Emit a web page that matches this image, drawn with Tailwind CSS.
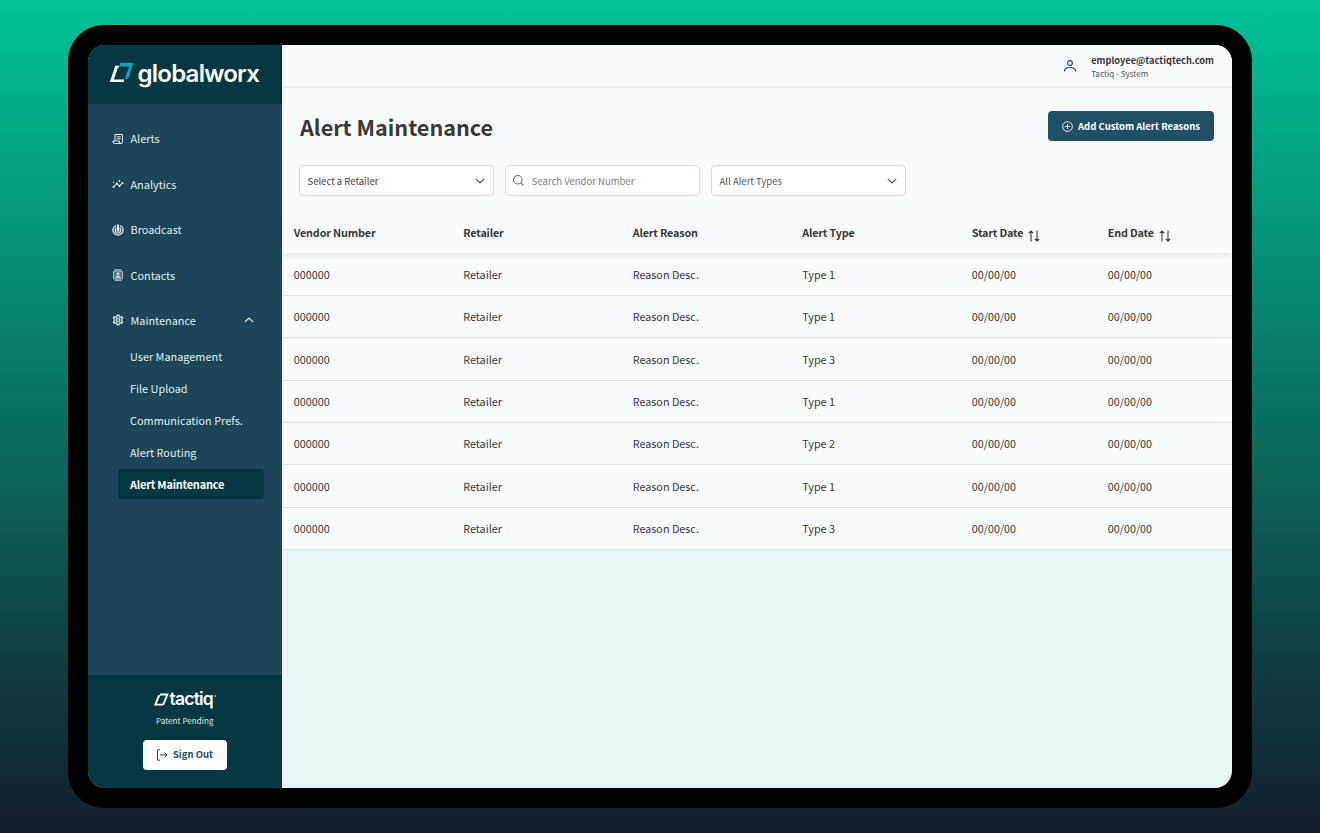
<!DOCTYPE html>
<html lang="en">
<head>
    <meta charset="UTF-8">
    <meta name="viewport" content="width=device-width, initial-scale=1.0">
    <title>Alert Maintenance</title>
    <script src="https://cdn.jsdelivr.net/npm/@tailwindcss/browser@4"></script>
</head>
<body class="h-screen overflow-hidden bg-[linear-gradient(180deg,#00c495,#141d2b)] font-['Noto_Sans_CJK_SC','Noto_Sans',sans-serif] px-[68px] pt-[25px] text-[#383838]">
<div class="h-[783px] w-[1184px] rounded-[36px] bg-black p-5">
  <div class="flex h-full overflow-hidden rounded-[17px] bg-[#e8f6f8]">

    <!-- Sidebar -->
    <aside class="flex w-[193.5px] shrink-0 flex-col bg-[#1c4656] text-[#dfedf0]">
      <div class="flex h-[59.5px] items-center border-b border-[#1e4a56] bg-[#053840] pl-[21px]">
        <svg class="h-6 w-[26px]" viewBox="0 0 26 24">
          <path d="M6.300 3.800H10.200L9.300 6.300H8.700L4.900 17.400H15.400L14.500 20.100H.8z" fill="#fff"/>
          <path d="M11.200 1.100H24.400L19.100 17H15.800L20.200 4.400H10.100z" fill="#0aa5c4"/>
        </svg>
        <span class="ml-[2.5px] font-['Inter'] text-[24px] leading-none font-semibold tracking-[-0.75px] text-white">globalworx</span>
      </div>

      <nav class="grow pt-[11.2px] text-[10.9px] leading-4">
        <a class="flex h-[45.4px] items-center pl-6">
          <svg class="mt-px mr-[6.5px] size-3" viewBox="0 0 24 24" fill="none" stroke="currentColor" stroke-width="2"><path d="M6 16V3h15v15a3 3 0 0 1-3 3H5a3 3 0 0 1-3-3v-2h13v2a3 3 0 0 0 3 3M9.500 7.500h8M9.500 11.500h8"/></svg>
          Alerts
        </a>
        <a class="flex h-[45.4px] items-center pl-6">
          <svg class="mt-px mr-[6.5px] size-3" viewBox="0 0 24 24" fill="currentColor"><path d="M21 8c-1.450 0-2.260 1.440-1.930 2.510l-3.550 3.560c-.3-.09-.74-.09-1.040 0l-2.550-2.550C12.270 10.450 11.460 9 10 9c-1.450 0-2.270 1.440-1.930 2.520l-4.560 4.550C2.440 15.740 1 16.550 1 18c0 1.100.9 2 2 2 1.450 0 2.260-1.440 1.930-2.510l4.550-4.560c.3.090.740.090 1.040 0l2.550 2.550C12.730 16.550 13.540 18 15 18c1.450 0 2.270-1.440 1.930-2.520l3.560-3.550c1.070.330 2.510-.480 2.510-1.930 0-1.100-.9-2-2-2z"/><path d="M15 9l.940-2.070L18 6l-2.060-.930L15 3l-.920 2.070L12 6l2.080.930zM3.500 11L4 9l2-.5L4 8l-.5-2L3 8l-2 .5L3 9z"/></svg>
          Analytics
        </a>
        <a class="flex h-[45.4px] items-center pl-6">
          <svg class="mt-px mr-[6.5px] size-3" viewBox="0 0 24 24" fill="none" stroke="currentColor" stroke-width="2.400"><path d="M16 3a10 10 0 1 1-8 0M15 7.700a5.600 5.600 0 1 1-6 0"/><circle cx="12" cy="12.500" r="1.800" fill="currentColor"/><path d="M12 11V1" stroke-width="3.800"/></svg>
          Broadcast
        </a>
        <a class="flex h-[45.4px] items-center pl-6">
          <svg class="mt-px mr-[6.5px] size-3" viewBox="0 0 24 24" fill="none" stroke="currentColor" stroke-width="2"><path d="M5 1.500h14M5 22.500h14" stroke-opacity=".8"/><rect x="3" y="4" width="18" height="16" rx="1" fill="currentColor" fill-opacity=".3" stroke-opacity=".7"/><circle cx="12" cy="9.500" r="1.800" fill="currentColor"/><path d="M7.500 17c0-4.500 9-4.500 9 0z" fill="currentColor" stroke="none"/></svg>
          Contacts
        </a>
        <a class="flex h-[45.4px] items-center pl-6">
          <svg class="mr-[6.5px] size-3" viewBox="0 0 24 24" fill="none" stroke="currentColor" stroke-width="2.400"><path d="M9.700 5.200 10.300 2h3.400l.6 3.200 2.300 1.300 3.100-1.100 1.700 3-2.500 2.100v3l2.500 2.100-1.700 3-3.100-1.100-2.300 1.300-.6 3.200h-3.400l-.6-3.200-2.300-1.300-3.100 1.100-1.700-3 2.500-2.100v-3L2.600 8.400l1.700-3 3.100 1.100z"/><circle cx="12" cy="12" r="3.400"/></svg>
          Maintenance
          <svg class="mr-7 ml-auto h-[6px] w-[10px]" viewBox="0 0 10 6" fill="none" stroke="currentColor" stroke-width="1.200"><path d="M.8 5.200 5 1l4.200 4.200"/></svg>
        </a>
        <div class="-mt-[1.4px] ml-[30px] flex w-[145.5px] flex-col">
          <a class="flex h-[31.85px] items-center pb-[1.5px] pl-3">User Management</a>
          <a class="flex h-[31.85px] items-center pb-[1.5px] pl-3">File Upload</a>
          <a class="flex h-[31.85px] items-center pb-[1.5px] pl-3">Communication Prefs.</a>
          <a class="flex h-[31.85px] items-center pb-[1.5px] pl-3">Alert Routing</a>
          <a class="flex h-[30.5px] items-center rounded-[3px] bg-[#053840] pb-[0.5px] pl-3 font-bold tracking-[-0.2px] text-white">Alert Maintenance</a>
        </div>
      </nav>

      <div class="flex h-[113.5px] flex-col items-center bg-[#053840]">
        <div class="mt-[14.5px] flex h-5 items-center text-white">
          <svg class="h-[13px] w-[15px]" viewBox="0 0 15 13" fill="currentColor"><path d="M4 2.200H6.400L2.700 10.700H9.400L8.700 12.400H0zM6.300.6H14.700L10.200 12.100H8.200L12 2.400H5.700z"/></svg>
          <span class="ml-px font-['Inter'] text-[17.5px] leading-5 font-semibold tracking-[-0.8px]">tactiq</span>
          <span class="mb-1.5 ml-px size-[2px] rounded-full bg-white/60"></span>
        </div>
        <p class="mt-1 text-[8.1px] leading-4 text-[#dfedf0]">Patent Pending</p>
        <button class="mt-[10.5px] flex h-[30px] w-[84px] items-center justify-center gap-[4.5px] rounded bg-white text-[9.5px] font-bold text-[#1c5064]">
          <svg class="size-3" viewBox="0 0 12 12" fill="none" stroke="currentColor"><path d="M4 .8H1.500v10.400H4M4 6h7M8.500 3.400 11 6 8.500 8.600"/></svg>
          Sign Out
        </button>
      </div>
    </aside>

    <!-- Main content -->
    <main class="flex grow flex-col">
      <header class="flex h-[43px] shrink-0 items-center justify-end border-b-2 border-[#edf1f2] bg-[#f8fcfd] pr-[18px]">
        <svg class="mr-[15px] size-3" viewBox="0 0 12 12" fill="none" stroke="#1c5064" stroke-width="1.100"><circle cx="6" cy="3" r="2.400"/><path d="M.5 11.500v-.8C.5 6.500 11.500 6.500 11.500 10.700v.8"/></svg>
        <div class="pt-0.5">
          <p class="text-[9.25px] leading-[14px] font-bold">employee@tactiqtech.com</p>
          <p class="text-[8.1px] leading-[14px] text-[#555]">Tactiq - System</p>
        </div>
      </header>

      <section class="bg-[#f8fcfd]">
        <div class="flex h-[77.4px] items-center justify-between pr-[18px] pl-[18.5px]">
          <h1 class="text-[21.6px] leading-8 font-bold">Alert Maintenance</h1>
          <button class="mb-px flex h-[30.5px] w-[166px] items-center justify-center gap-[5px] rounded bg-[#1f5064] text-[9.5px] font-bold text-white">
            <svg class="size-[11px]" viewBox="0 0 12 12" fill="none" stroke="currentColor"><circle cx="6" cy="6" r="5.300"/><path d="M6 3.200v5.600M3.200 6h5.600"/></svg>
            Add Custom Alert Reasons
          </button>
        </div>
        <div class="flex gap-[10.5px] pl-[17.5px] text-[9.5px] text-[#444]">
          <div class="flex h-[31px] w-[195.3px] items-center justify-between rounded border border-[#d5dcdf] bg-white pr-2 pl-[7.5px]">
            Select a Retailer
            <svg class="h-[6px] w-[10px]" viewBox="0 0 10 6" fill="none" stroke="#555" stroke-width="1.100"><path d="M.8.8 5 5 9.200.8"/></svg>
          </div>
          <div class="flex h-[31px] w-[195.3px] items-center gap-2 rounded border border-[#d5dcdf] bg-white pl-[7px] text-[#777f85]">
            <svg class="size-[11px]" viewBox="0 0 12 12" fill="none" stroke="#666e74" stroke-width="1.100"><circle cx="5.200" cy="5.200" r="4.600"/><path d="m8.500 8.500 3 3"/></svg>
            Search Vendor Number
          </div>
          <div class="flex h-[31px] w-[195.3px] items-center justify-between rounded border border-[#d5dcdf] bg-white pr-2 pl-2 text-[#555d63]">
            All Alert Types
            <svg class="h-[6px] w-[10px]" viewBox="0 0 10 6" fill="none" stroke="#555" stroke-width="1.100"><path d="M.8.8 5 5 9.200.8"/></svg>
          </div>
        </div>
        <div class="relative mt-[17.1px] grid h-[40px] grid-cols-[169.5px_169.5px_169.5px_169.5px_136px_1fr] items-center pb-[3px] pl-[12.2px] text-[10.8px] font-bold tracking-[-0.16px] shadow-[0_3px_5px_rgba(0,0,0,0.07)]">
          <span>Vendor Number</span>
          <span>Retailer</span>
          <span>Alert Reason</span>
          <span>Alert Type</span>
          <span class="flex items-center gap-[5px]">Start Date <svg class="mt-2 h-3 w-3" viewBox="0 0 12 12" fill="none" stroke="currentColor" stroke-width="1.100"><path d="M3 11.500V1M.8 3.200 3 1l2.200 2.200M9 .5V11M6.800 8.800 9 11l2.200-2.200"/></svg></span>
          <span class="flex items-center gap-[5px]">End Date <svg class="mt-2 h-3 w-3" viewBox="0 0 12 12" fill="none" stroke="currentColor" stroke-width="1.100"><path d="M3 11.500V1M.8 3.200 3 1l2.200 2.200M9 .5V11M6.800 8.800 9 11l2.200-2.200"/></svg></span>
        </div>
        <div id="alertRows"></div>
      </section>
    </main>
  </div>
</div>

<script>
  const types = ['Type 1', 'Type 1', 'Type 3', 'Type 1', 'Type 2', 'Type 1', 'Type 3'];
  const rows = document.getElementById('alertRows');

  types.forEach(type => {
    const row = document.createElement('div');
    row.className = 'grid h-[42.35px] grid-cols-[169.5px_169.5px_169.5px_169.5px_136px_1fr] items-center border-b border-[#e1e7e9] pb-[0.5px] pl-[12.2px] text-[10.8px]';
    row.innerHTML = `
      <span>000000</span>
      <span>Retailer</span>
      <span>Reason Desc.</span>
      <span>${type}</span>
      <span>00/00/00</span>
      <span>00/00/00</span>
    `;
    rows.appendChild(row);
  });
</script>
</body>
</html>
